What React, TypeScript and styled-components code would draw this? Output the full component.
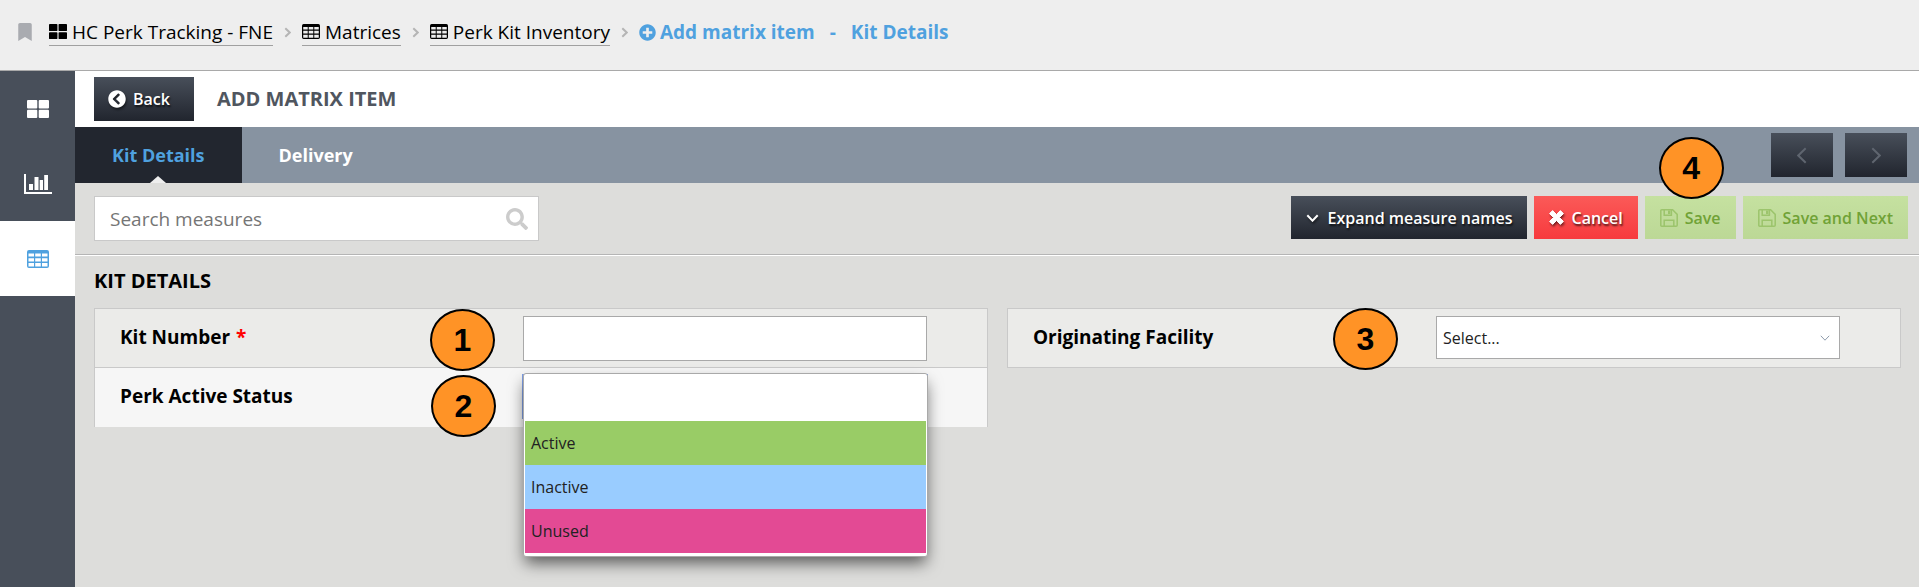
import React from 'react';
import styled, { createGlobalStyle, css } from 'styled-components';
import { FaBookmark, FaChevronCircleLeft, FaPlusCircle, FaSearch } from 'react-icons/fa';

const GlobalStyle = createGlobalStyle`
  *, *::before, *::after { box-sizing: border-box; }
  html, body, #root { min-height: 100vh; }
  body {
    margin: 0;
    background: #dddddb;
    color: #000;
    font-family: "Open Sans", "Noto Sans", sans-serif;
    font-size: 16px;
  }
  button, input, select { font-family: inherit; }
  svg { display: block; flex: none; }
`;

/* ---------- icons ---------- */

const TilesIcon = ({ width, height }: { width: number; height: number }) => (
  <svg width={width} height={height} viewBox="0 0 22 18" preserveAspectRatio="none" fill="currentColor" aria-hidden="true">
    <rect x="0" y="0" width="10.3" height="8.4" rx="1" />
    <rect x="11.7" y="0" width="10.3" height="8.4" rx="1" />
    <rect x="0" y="9.8" width="10.3" height="8.2" rx="1" />
    <rect x="11.7" y="9.8" width="10.3" height="8.2" rx="1" />
  </svg>
);

const GridIcon = ({ width, height }: { width: number; height: number }) => (
  <svg width={width} height={height} viewBox="0 0 22 18" preserveAspectRatio="none" aria-hidden="true">
    <path
      fill="currentColor"
      fillRule="evenodd"
      d="M2 0H20Q22 0 22 2V16Q22 18 20 18H2Q0 18 0 16V2Q0 0 2 0Z
         M1.5 3.6V6.6H7V3.6Z M8.2 3.6V6.6H13.8V3.6Z M15 3.6V6.6H20.5V3.6Z
         M1.5 8.2V11.4H7V8.2Z M8.2 8.2V11.4H13.8V8.2Z M15 8.2V11.4H20.5V8.2Z
         M1.5 13V16.5H7V13Z M8.2 13V16.5H13.8V13Z M15 13V16.5H20.5V13Z"
    />
  </svg>
);

const ChartIcon = () => (
  <svg width="28" height="20" viewBox="0 0 28 20" fill="currentColor" aria-hidden="true">
    <path d="M0 0H2V18H28V20H0Z" />
    <path d="M5 10H9V16H5Z M10.5 3H14.5V16H10.5Z M15.7 6H19V16H15.7Z M20.2 1H24V16H20.2Z" />
  </svg>
);

const FloppyIcon = () => (
  <svg width="18" height="18" viewBox="0 0 18 18" fill="none" stroke="currentColor" strokeWidth="1.5" aria-hidden="true">
    <path d="M1.8 .8H12.6L17.2 5.4V16.2Q17.2 17.2 16.2 17.2H1.8Q.8 17.2 .8 16.2V1.8Q.8 .8 1.8 .8Z" />
    <path d="M4.2 17V11.3H13.8V17" />
    <path d="M4.2 1V6.2H11.4V1" />
    <path d="M9.2 1.5V5" strokeWidth="2.4" />
  </svg>
);

const CrossIcon = () => (
  <svg width="15" height="15" viewBox="0 0 15 15" fill="currentColor" aria-hidden="true">
    <path d="M3.6 .6L7.5 4.5L11.4 .6L14.4 3.6L10.5 7.5L14.4 11.4L11.4 14.4L7.5 10.5L3.6 14.4L.6 11.4L4.5 7.5L.6 3.6Z" stroke="currentColor" strokeWidth="1" strokeLinejoin="round" />
  </svg>
);

const ChevronIcon = ({ dir, width, height, stroke = 2 }: { dir: 'left' | 'right' | 'down'; width: number; height: number; stroke?: number }) => {
  const m = stroke / 2 + 0.3;
  const points =
    dir === 'down'
      ? `${m},${m} ${width / 2},${height - m} ${width - m},${m}`
      : dir === 'right'
        ? `${m},${m} ${width - m},${height / 2} ${m},${height - m}`
        : `${width - m},${m} ${m},${height / 2} ${width - m},${height - m}`;
  return (
    <svg width={width} height={height} viewBox={`0 0 ${width} ${height}`} fill="none" aria-hidden="true">
      <polyline points={points} stroke="currentColor" strokeWidth={stroke} />
    </svg>
  );
};

/* ---------- breadcrumb header ---------- */

const Header = styled.header`
  display: flex;
  align-items: center;
  height: 71px;
  padding: 0 16px 6px;
  background: #eee;
  border-bottom: 1px solid #a9a9a9;
`;

const BookmarkButton = styled.button`
  display: flex;
  margin: 0 15px 0 0;
  padding: 0;
  border: 0;
  background: none;
  color: #a9abb0;
`;

const Crumbs = styled.nav`
  display: flex;
  align-items: center;
  gap: 11px;
  color: #b5b5b5;
  white-space: nowrap;
`;

const Crumb = styled.a`
  display: flex;
  align-items: center;
  gap: 5px;
  height: 28px;
  border-bottom: 1px solid #a0a0a0;
  color: #000;
  font-size: 19px;
  line-height: 26px;
  text-decoration: none;
`;

const CurrentCrumb = styled.span`
  display: flex;
  align-items: center;
  gap: 4px;
  color: #4fa1df;
  font-size: 19px;
  font-weight: 700;
  line-height: 26px;
`;

const Dash = styled.span`
  padding: 0 11px;
`;

/* ---------- frame ---------- */

const Frame = styled.div`
  display: flex;
  min-height: calc(100vh - 71px);
`;

const Sidebar = styled.nav`
  flex: none;
  width: 75px;
  background: #484f5a;
`;

const SideLink = styled.a<{ $active?: boolean }>`
  display: flex;
  align-items: center;
  justify-content: center;
  height: 75px;
  background: ${(p) => (p.$active ? '#fff' : 'transparent')};
  color: ${(p) => (p.$active ? '#4fa1df' : '#fff')};
`;

const Main = styled.main`
  flex: 1;
  min-width: 0;
`;

/* ---------- buttons ---------- */

const tones = {
  dark: css`
    gap: 9px;
    background: linear-gradient(#484f5a, #21252e);
    color: #fff;
    text-shadow: 1px 2px 2px rgba(0, 0, 0, 0.7);
    svg { filter: drop-shadow(1px 2px 1px rgba(0, 0, 0, 0.5)); }
  `,
  red: css`
    gap: 7px;
    background: linear-gradient(#fb5a58, #f73a3e);
    color: #fff;
    text-shadow: 1px 2px 2px rgba(0, 0, 0, 0.7);
    svg { filter: drop-shadow(1px 2px 1px rgba(0, 0, 0, 0.5)); }
  `,
  green: css`
    gap: 7px;
    background: linear-gradient(#c5e1a0, #bcd896);
    color: #70a236;
    svg { color: #9cc46c; }
  `,
};

const Button = styled.button<{ $tone: keyof typeof tones }>`
  display: flex;
  align-items: center;
  height: 43px;
  padding: 0 15px;
  border: 0;
  font-size: 16px;
  font-weight: 600;
  white-space: nowrap;
  ${(p) => tones[p.$tone]}
`;

const BackButton = styled(Button)`
  gap: 7px;
  height: 44px;
  padding: 0 24px 0 14px;
`;

const PagerButton = styled.button`
  display: flex;
  align-items: center;
  justify-content: center;
  width: 62px;
  height: 44px;
  padding: 0;
  border: 0;
  background: linear-gradient(#484f5a, #21252e);
  color: #5f656f;
`;

/* ---------- title and tabs ---------- */

const TitleBar = styled.div`
  display: flex;
  align-items: center;
  gap: 23px;
  height: 56px;
  padding: 0 19px;
  background: #fff;
`;

const PageTitle = styled.h1`
  margin: 0;
  color: #50565f;
  font-size: 20px;
  font-weight: 700;
  line-height: 26px;
  text-transform: uppercase;
`;

const TabBar = styled.div`
  display: flex;
  align-items: center;
  justify-content: space-between;
  height: 56px;
  padding-right: 12px;
  background: #8793a1;
`;

const Tabs = styled.div`
  display: flex;
  align-self: stretch;
`;

const Tab = styled.button<{ $active?: boolean }>`
  position: relative;
  padding: 0 37px;
  border: 0;
  background: ${(p) => (p.$active ? '#22262f' : 'transparent')};
  color: ${(p) => (p.$active ? '#4fa1df' : '#fff')};
  font-size: 18px;
  font-weight: 700;

  ${(p) =>
    p.$active &&
    css`
      &::after {
        content: '';
        position: absolute;
        bottom: 0;
        left: 50%;
        margin-left: -8px;
        border: 8px solid transparent;
        border-top: 0;
        border-bottom: 7px solid #eee;
      }
    `}
`;

const Pager = styled.div`
  display: flex;
  gap: 12px;
`;

/* ---------- toolbar ---------- */

const Toolbar = styled.div`
  display: flex;
  align-items: flex-start;
  justify-content: space-between;
  height: 72px;
  padding: 13px 11px 0 19px;
  border-bottom: 1px solid #b5b5b5;
`;

const SearchBox = styled.label`
  display: flex;
  align-items: center;
  width: 445px;
  height: 45px;
  padding: 0 10px 0 15px;
  border: 1px solid #c9c9c9;
  background: #fff;
  color: #ccc;
`;

const SearchInput = styled.input`
  flex: 1;
  min-width: 0;
  padding: 0;
  border: 0;
  outline: 0;
  background: none;
  font-size: 19px;
  &::placeholder { color: #757575; opacity: 1; }
`;

const Actions = styled.div`
  display: flex;
  gap: 7px;
`;

/* ---------- form ---------- */

const Section = styled.section`
  padding: 0 18px 24px 19px;
  border-top: 1px solid #fff;
`;

const SectionTitle = styled.h2`
  margin: 0;
  padding: 12px 0 14px;
  font-size: 20px;
  font-weight: 700;
  line-height: 26px;
`;

const Columns = styled.div`
  display: grid;
  grid-template-columns: 1fr 1fr;
  align-items: start;
  gap: 19px;
`;

const Panel = styled.div`
  border: 1px solid #c9c9c9;
  border-bottom: 0;
`;

const Row = styled.div<{ $alt?: boolean }>`
  display: grid;
  grid-template-columns: 428fr 404fr 60fr;
  height: 59px;
  padding-top: 7px;
  border-bottom: ${(p) => (p.$alt ? '0' : '1px solid #c9c9c9')};
  background: ${(p) => (p.$alt ? '#f6f6f6' : '#ebebe9')};
`;

const FieldLabel = styled.label`
  padding-left: 25px;
  font-size: 19px;
  font-weight: 700;
  line-height: 42px;
`;

const Required = styled.span`
  margin-left: 1px;
  color: #f00;
`;

const Control = styled.div`
  position: relative;
`;

const TextInput = styled.input`
  display: block;
  width: 100%;
  height: 45px;
  padding: 0 6px;
  border: 1px solid #a9a9a9;
  border-radius: 0;
  background: #fff;
  font-size: 16px;
`;

const Select = styled.select<{ $focused?: boolean }>`
  display: block;
  width: 100%;
  height: 43px;
  padding: 0 6px;
  border: 1px solid #a9a9a9;
  border-radius: 0;
  outline: ${(p) => (p.$focused ? '1px solid #7f9fe6' : '0')};
  background: #fff;
  color: #222;
  font-size: 16px;
  appearance: none;
`;

const SelectArrow = styled.span`
  position: absolute;
  top: 19px;
  right: 10px;
  color: #8e9bab;
  pointer-events: none;
`;

const Menu = styled.ul`
  position: absolute;
  top: -2px;
  left: 0;
  right: -1px;
  z-index: 2;
  margin: 0;
  padding: 1px 1px 3px;
  border: 1px solid #a9a9a9;
  border-radius: 3px;
  background: #fff;
  box-shadow: 0 8px 16px -2px rgba(0, 0, 0, 0.6);
  list-style: none;
`;

const MenuOption = styled.li<{ $color: string }>`
  height: ${(p) => (p.$color === '#fff' ? '46px' : '44px')};
  padding: 0 6px;
  background: ${(p) => p.$color};
  color: #222;
  font-size: 16px;
  line-height: 44px;
`;

/* ---------- numbered markers ---------- */

const Anchor = styled.div`
  position: relative;
`;

const Marker = styled.span<{ $top: number; $right: string }>`
  position: absolute;
  top: ${(p) => p.$top}px;
  right: ${(p) => p.$right};
  z-index: 3;
  display: flex;
  align-items: center;
  justify-content: center;
  width: 65px;
  height: 62px;
  border: 2px solid #000;
  border-radius: 50%;
  background: #ff9326;
  color: #000;
  font-family: "Liberation Sans", Arial, sans-serif;
  font-size: 32px;
  font-weight: 700;
  line-height: 1;
`;

const statuses = [
  { label: '', color: '#fff' },
  { label: 'Active', color: '#99cc66' },
  { label: 'Inactive', color: '#99ccff' },
  { label: 'Unused', color: '#e34a94' },
];

export default function App() {
  return (
    <>
      <GlobalStyle />
      <Header>
        <BookmarkButton aria-label="Bookmark">
          <FaBookmark size={18} />
        </BookmarkButton>
        <Crumbs aria-label="Breadcrumb">
          <Crumb href="#tracking"><TilesIcon width={18} height={15} />HC Perk Tracking - FNE</Crumb>
          <ChevronIcon dir="right" width={7} height={11} />
          <Crumb href="#matrices"><GridIcon width={18} height={15} />Matrices</Crumb>
          <ChevronIcon dir="right" width={7} height={11} />
          <Crumb href="#inventory"><GridIcon width={18} height={15} />Perk Kit Inventory</Crumb>
          <ChevronIcon dir="right" width={7} height={11} />
          <CurrentCrumb>
            <FaPlusCircle size={17} />
            <span>Add matrix item</span>
            <Dash>-</Dash>
            <span>Kit Details</span>
          </CurrentCrumb>
        </Crumbs>
      </Header>

      <Frame>
        <Sidebar aria-label="Sections">
          <SideLink href="#dashboard" aria-label="Dashboard"><TilesIcon width={22} height={18} /></SideLink>
          <SideLink href="#reports" aria-label="Reports"><ChartIcon /></SideLink>
          <SideLink href="#matrix" aria-label="Matrices" $active><GridIcon width={22} height={18} /></SideLink>
        </Sidebar>

        <Main>
          <TitleBar>
            <BackButton $tone="dark"><FaChevronCircleLeft size={18} />Back</BackButton>
            <PageTitle>Add matrix item</PageTitle>
          </TitleBar>

          <TabBar>
            <Tabs role="tablist">
              <Tab role="tab" aria-selected="true" $active>Kit Details</Tab>
              <Tab role="tab" aria-selected="false">Delivery</Tab>
            </Tabs>
            <Pager>
              <PagerButton aria-label="Previous"><ChevronIcon dir="left" width={10} height={17} /></PagerButton>
              <PagerButton aria-label="Next"><ChevronIcon dir="right" width={10} height={17} /></PagerButton>
            </Pager>
          </TabBar>

          <Toolbar>
            <SearchBox>
              <SearchInput type="text" placeholder="Search measures" aria-label="Search measures" />
              <FaSearch size={22} />
            </SearchBox>
            <Actions>
              <Button $tone="dark"><ChevronIcon dir="down" width={13} height={8} />Expand measure names</Button>
              <Button $tone="red"><CrossIcon />Cancel</Button>
              <Anchor>
                <Button $tone="green" disabled><FloppyIcon />Save</Button>
                <Marker $top={-59} $right="12px">4</Marker>
              </Anchor>
              <Button $tone="green" disabled><FloppyIcon />Save and Next</Button>
            </Actions>
          </Toolbar>

          <Section>
            <SectionTitle>KIT DETAILS</SectionTitle>
            <Columns>
              <Panel>
                <Row>
                  <FieldLabel htmlFor="kit-number">Kit Number <Required>*</Required></FieldLabel>
                  <Control>
                    <TextInput id="kit-number" type="text" />
                    <Marker $top={-7} $right="calc(100% + 28px)">1</Marker>
                  </Control>
                </Row>
                <Row $alt>
                  <FieldLabel htmlFor="perk-status">Perk Active Status</FieldLabel>
                  <Control>
                    <Select id="perk-status" $focused defaultValue="">
                      {statuses.map((s) => (
                        <option key={s.label} value={s.label}>{s.label}</option>
                      ))}
                    </Select>
                    <Menu role="listbox" aria-label="Perk Active Status">
                      {statuses.map((s) => (
                        <MenuOption key={s.label} role="option" aria-selected={s.label === ''} $color={s.color}>{s.label}</MenuOption>
                      ))}
                    </Menu>
                    <Marker $top={0} $right="calc(100% + 27px)">2</Marker>
                  </Control>
                </Row>
              </Panel>
              <Panel>
                <Row>
                  <FieldLabel htmlFor="facility">Originating Facility</FieldLabel>
                  <Control>
                    <Select id="facility" defaultValue="">
                      <option value="">Select...</option>
                    </Select>
                    <SelectArrow><ChevronIcon dir="down" width={10} height={6} stroke={1} /></SelectArrow>
                    <Marker $top={-8} $right="calc(100% + 38px)">3</Marker>
                  </Control>
                </Row>
              </Panel>
            </Columns>
          </Section>
        </Main>
      </Frame>
    </>
  );
}
